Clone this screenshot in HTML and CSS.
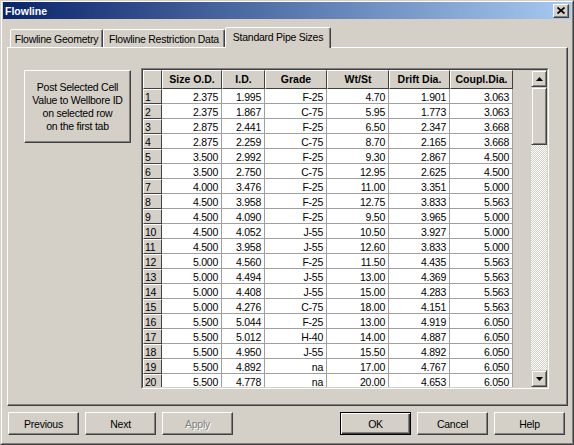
FILE: index.html
```html
<!DOCTYPE html>
<html>
<head>
<meta charset="utf-8">
<title>Flowline</title>
<link rel="stylesheet" href="styles.css">
</head>
<body>
<div class="window">
  <div class="window-inner">
    <div class="titlebar">
      <span class="title">Flowline</span>
      <span class="close"><svg width="8" height="7" viewBox="0 0 8 7"><path d="M0.5 0.5 L7.5 6.5 M7.5 0.5 L0.5 6.5" stroke="#000" stroke-width="1.7" fill="none"/></svg></span>
    </div>
    <div class="tabs">
      <div class="tab tab1">Flowline Geometry</div>
      <div class="tab tab2">Flowline Restriction Data</div>
      <div class="tab tab3 active">Standard Pipe Sizes</div>
    </div>
    <div class="panel">
      <div class="post-btn">Post Selected Cell<br>Value to Wellbore ID<br>on selected row<br>on the first tab</div>
      <div class="grid-outer">
        <div class="grid-inner">
          <div class="table">
            <div class="hrow"><div class="h"></div><div class="h">Size O.D.</div><div class="h">I.D.</div><div class="h">Grade</div><div class="h">Wt/St</div><div class="h">Drift Dia.</div><div class="h">Coupl.Dia.</div></div>
            <div class="row"><div class="n">1</div><div class="d">2.375</div><div class="d">1.995</div><div class="d">F-25</div><div class="d">4.70</div><div class="d">1.901</div><div class="d">3.063</div></div>
            <div class="row"><div class="n">2</div><div class="d">2.375</div><div class="d">1.867</div><div class="d">C-75</div><div class="d">5.95</div><div class="d">1.773</div><div class="d">3.063</div></div>
            <div class="row"><div class="n">3</div><div class="d">2.875</div><div class="d">2.441</div><div class="d">F-25</div><div class="d">6.50</div><div class="d">2.347</div><div class="d">3.668</div></div>
            <div class="row"><div class="n">4</div><div class="d">2.875</div><div class="d">2.259</div><div class="d">C-75</div><div class="d">8.70</div><div class="d">2.165</div><div class="d">3.668</div></div>
            <div class="row"><div class="n">5</div><div class="d">3.500</div><div class="d">2.992</div><div class="d">F-25</div><div class="d">9.30</div><div class="d">2.867</div><div class="d">4.500</div></div>
            <div class="row"><div class="n">6</div><div class="d">3.500</div><div class="d">2.750</div><div class="d">C-75</div><div class="d">12.95</div><div class="d">2.625</div><div class="d">4.500</div></div>
            <div class="row"><div class="n">7</div><div class="d">4.000</div><div class="d">3.476</div><div class="d">F-25</div><div class="d">11.00</div><div class="d">3.351</div><div class="d">5.000</div></div>
            <div class="row"><div class="n">8</div><div class="d">4.500</div><div class="d">3.958</div><div class="d">F-25</div><div class="d">12.75</div><div class="d">3.833</div><div class="d">5.563</div></div>
            <div class="row"><div class="n">9</div><div class="d">4.500</div><div class="d">4.090</div><div class="d">F-25</div><div class="d">9.50</div><div class="d">3.965</div><div class="d">5.000</div></div>
            <div class="row"><div class="n">10</div><div class="d">4.500</div><div class="d">4.052</div><div class="d">J-55</div><div class="d">10.50</div><div class="d">3.927</div><div class="d">5.000</div></div>
            <div class="row"><div class="n">11</div><div class="d">4.500</div><div class="d">3.958</div><div class="d">J-55</div><div class="d">12.60</div><div class="d">3.833</div><div class="d">5.000</div></div>
            <div class="row"><div class="n">12</div><div class="d">5.000</div><div class="d">4.560</div><div class="d">F-25</div><div class="d">11.50</div><div class="d">4.435</div><div class="d">5.563</div></div>
            <div class="row"><div class="n">13</div><div class="d">5.000</div><div class="d">4.494</div><div class="d">J-55</div><div class="d">13.00</div><div class="d">4.369</div><div class="d">5.563</div></div>
            <div class="row"><div class="n">14</div><div class="d">5.000</div><div class="d">4.408</div><div class="d">J-55</div><div class="d">15.00</div><div class="d">4.283</div><div class="d">5.563</div></div>
            <div class="row"><div class="n">15</div><div class="d">5.000</div><div class="d">4.276</div><div class="d">C-75</div><div class="d">18.00</div><div class="d">4.151</div><div class="d">5.563</div></div>
            <div class="row"><div class="n">16</div><div class="d">5.500</div><div class="d">5.044</div><div class="d">F-25</div><div class="d">13.00</div><div class="d">4.919</div><div class="d">6.050</div></div>
            <div class="row"><div class="n">17</div><div class="d">5.500</div><div class="d">5.012</div><div class="d">H-40</div><div class="d">14.00</div><div class="d">4.887</div><div class="d">6.050</div></div>
            <div class="row"><div class="n">18</div><div class="d">5.500</div><div class="d">4.950</div><div class="d">J-55</div><div class="d">15.50</div><div class="d">4.892</div><div class="d">6.050</div></div>
            <div class="row"><div class="n">19</div><div class="d">5.500</div><div class="d">4.892</div><div class="d">na</div><div class="d">17.00</div><div class="d">4.767</div><div class="d">6.050</div></div>
            <div class="row"><div class="n">20</div><div class="d">5.500</div><div class="d">4.778</div><div class="d">na</div><div class="d">20.00</div><div class="d">4.653</div><div class="d">6.050</div></div>
          </div>
          <div class="gap"></div>
          <div class="scroll">
            <div class="sb-btn"><svg width="7" height="4" viewBox="0 0 7 4"><polygon points="0,4 7,4 3.5,0" fill="#000"/></svg></div>
            <div class="thumb"></div>
            <div class="track"></div>
            <div class="sb-btn"><svg width="7" height="4" viewBox="0 0 7 4"><polygon points="0,0 7,0 3.5,4" fill="#000"/></svg></div>
          </div>
        </div>
      </div>
    </div>
    <div class="footer">
      <div class="group">
        <div class="btn">Previous</div>
        <div class="btn">Next</div>
        <div class="btn disabled">Apply</div>
      </div>
      <div class="group">
        <div class="btn default">OK</div>
        <div class="btn">Cancel</div>
        <div class="btn">Help</div>
      </div>
    </div>
  </div>
</div>
</body>
</html>
```
FILE: styles.css
```css
html, body {
  margin: 0;
  padding: 0;
}
body {
  background: #d4d0c8;
  font-family: "Liberation Sans", Arial, sans-serif;
  font-size: 10.5px;
  letter-spacing: -0.25px;
  color: #000;
}
.window {
  width: 574px;
  height: 445px;
  box-sizing: border-box;
  border: 1px solid;
  border-color: #d4d0c8 #404040 #404040 #d4d0c8;
  background: #d4d0c8;
}
.window-inner {
  height: 100%;
  box-sizing: border-box;
  border: 1px solid;
  border-color: #fff #808080 #808080 #fff;
  display: flex;
  flex-direction: column;
}
.titlebar {
  height: 17px;
  margin: 0 1px;
  padding-left: 2px;
  background: linear-gradient(to right, #0a246a, #a6caf0);
  display: flex;
  align-items: center;
  justify-content: space-between;
  flex: none;
}
.title {
  color: #fff;
  font-weight: bold;
  font-size: 10.5px;
  letter-spacing: 0;
}
.close {
  width: 16px;
  height: 14px;
  box-sizing: border-box;
  margin-right: 2px;
  background: #d4d0c8;
  border: 1px solid;
  border-color: #fff #404040 #404040 #fff;
  box-shadow: inset -1px -1px #808080;
  display: flex;
  align-items: center;
  justify-content: center;
}
.close svg { display: block; }

.tabs {
  display: flex;
  align-items: flex-end;
  height: 20px;
  margin: 8px 0 0 8px;
  flex: none;
  position: relative;
  z-index: 2;
}
.tab {
  height: 18px;
  box-sizing: border-box;
  border: 1px solid;
  border-bottom: none;
  border-color: #fff #404040 transparent #fff;
  box-shadow: inset -1px 0 #808080;
  border-radius: 2px 2px 0 0;
  display: flex;
  align-items: center;
  justify-content: center;
  white-space: nowrap;
  background: #d4d0c8;
  flex: none;
}
.tab1 { width: 93px; }
.tab2 { width: 122px; }
.tab3 { width: 106px; }
.tab.active {
  height: 21px;
  margin-bottom: -1px;
  padding-bottom: 2px;
  position: relative;
}

.panel {
  width: 561px;
  height: 359px;
  margin-left: 5px;
  box-sizing: border-box;
  border: 1px solid;
  border-color: #fff #404040 #404040 #fff;
  box-shadow: inset -1px -1px #808080;
  display: flex;
  align-items: flex-start;
  padding: 20px 0 0 16px;
  flex: none;
}
.post-btn {
  width: 107px;
  height: 73px;
  margin-top: 2px;
  margin-right: 10px;
  padding-top: 1px;
  box-sizing: border-box;
  border: 1px solid;
  border-color: #fff #404040 #404040 #fff;
  box-shadow: inset -1px -1px #808080;
  display: flex;
  align-items: center;
  justify-content: center;
  text-align: center;
  line-height: 13px;
  flex: none;
}
.grid-outer {
  width: 408px;
  height: 321px;
  box-sizing: border-box;
  border: 1px solid;
  border-color: #808080 #fff #fff #808080;
  flex: none;
}
.grid-inner {
  height: 100%;
  box-sizing: border-box;
  border: 1px solid;
  border-color: #404040 #d4d0c8 #d4d0c8 #404040;
  background: #d4d0c8;
  display: flex;
  overflow: hidden;
}
.table {
  width: 370px;
  flex: none;
}
.gap {
  width: 18px;
  flex: none;
}
.hrow, .row {
  display: flex;
}
.hrow { height: 19px; }
.row { height: 15px; }
.hrow > div, .row > div {
  box-sizing: border-box;
  flex: none;
  overflow: hidden;
  white-space: nowrap;
}
.hrow > :nth-child(1), .row > :nth-child(1) { width: 19px; }
.hrow > :nth-child(2), .row > :nth-child(2) { width: 60px; }
.hrow > :nth-child(3), .row > :nth-child(3) { width: 43px; }
.hrow > :nth-child(4), .row > :nth-child(4) { width: 62px; }
.hrow > :nth-child(5), .row > :nth-child(5) { width: 62px; }
.hrow > :nth-child(6), .row > :nth-child(6) { width: 61px; }
.hrow > :nth-child(7), .row > :nth-child(7) { width: 63px; }
.h {
  background: #d4d0c8;
  border: 1px solid;
  border-color: #fff #404040 #404040 #fff;
  font-weight: bold;
  letter-spacing: 0;
  text-align: center;
  line-height: 17px;
}
.n {
  background: #d4d0c8;
  border: 1px solid;
  border-color: #fff #404040 #404040 #fff;
  padding-left: 1px;
  padding-top: 1px;
  line-height: 12px;
}
.d {
  background: #fff;
  border-right: 1px solid #a0a0a0;
  border-bottom: 1px solid #a0a0a0;
  text-align: right;
  padding-right: 3px;
  padding-top: 2px;
  line-height: 13px;
}
.scroll {
  width: 16px;
  flex: none;
  display: flex;
  flex-direction: column;
  background: repeating-conic-gradient(#fff 0 25%, #d4d0c8 0 50%) 0 0 / 2px 2px;
}
.sb-btn, .thumb {
  box-sizing: border-box;
  background: #d4d0c8;
  border: 1px solid;
  border-color: #d4d0c8 #404040 #404040 #d4d0c8;
  box-shadow: inset 1px 1px #fff, inset -1px -1px #808080;
  flex: none;
}
.sb-btn {
  height: 17px;
  display: flex;
  align-items: center;
  justify-content: center;
}
.sb-btn svg { display: block; }
.thumb { height: 58px; }
.track { flex: 1; }

.footer {
  display: flex;
  justify-content: space-between;
  margin-top: 6px;
  padding: 0 7px 0 6px;
  flex: none;
}
.group {
  display: flex;
  gap: 6px;
}
.btn {
  width: 71px;
  height: 23px;
  box-sizing: border-box;
  border: 1px solid;
  border-color: #fff #404040 #404040 #fff;
  box-shadow: inset -1px -1px #808080;
  display: flex;
  align-items: center;
  justify-content: center;
}
.btn.default {
  border-color: #000;
  box-shadow: inset 1px 1px #fff, inset -1px -1px #404040, inset -2px -2px #808080;
}
.btn.disabled {
  color: #808080;
  text-shadow: 1px 1px #fff;
}
```
